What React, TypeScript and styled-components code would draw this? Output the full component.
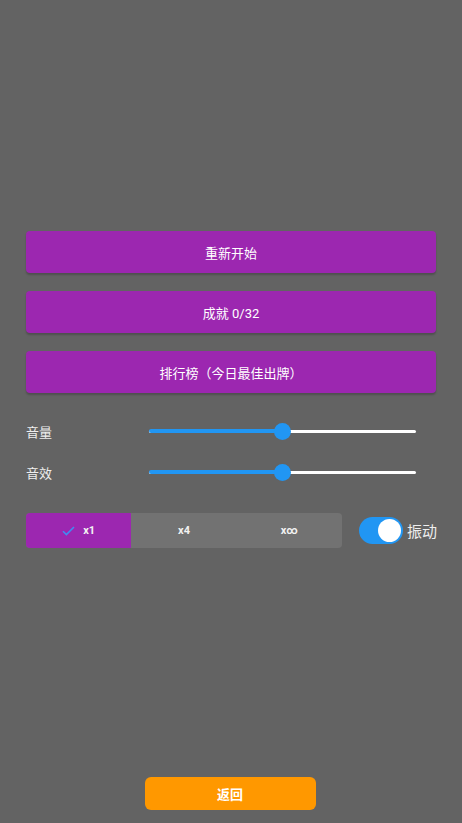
import styled, { createGlobalStyle } from "styled-components"

const GlobalStyle = createGlobalStyle`
  html, body {
    margin: 0;
    padding: 0;
    background: #636363;
  }
  * {
    box-sizing: border-box;
  }
`

const Page = styled.div`
  min-height: 100vh;
  display: flex;
  flex-direction: column;
  padding: 0 26px;
  font-family: Roboto, "Noto Sans CJK SC", sans-serif;
  color: #fff;
`

const Menu = styled.div`
  margin-top: 231px;
  display: flex;
  flex-direction: column;
  gap: 18px;
`

const MenuButton = styled.button`
  height: 42px;
  width: 100%;
  border: none;
  border-radius: 4px;
  background: #9c27b0;
  color: #fff;
  font-family: inherit;
  font-size: 13px;
  font-weight: 400;
  box-shadow: 0 2px 2px rgba(0, 0, 0, 0.2);
`

const Sliders = styled.div`
  margin-top: 23px;
  display: flex;
  flex-direction: column;
  gap: 11px;
`

const SliderRow = styled.div`
  height: 30px;
  display: flex;
  align-items: center;
  padding-right: 20px;
`

const SliderLabel = styled.div`
  width: 123px;
  font-size: 13px;
  color: #eee;
`

const Track = styled.div`
  position: relative;
  flex: 1;
  height: 3px;
  border-radius: 2px;
  background: #fff;
`

const ActiveTrack = styled.div<{ $value: number }>`
  position: absolute;
  left: 0;
  top: -0.5px;
  height: 4px;
  width: ${(p) => p.$value}%;
  border-radius: 2px;
  background: #2196f3;
`

const Thumb = styled.div<{ $value: number }>`
  position: absolute;
  left: ${(p) => p.$value}%;
  top: 50%;
  width: 17px;
  height: 17px;
  margin: -8.5px 0 0 -8.5px;
  border-radius: 50%;
  background: #2196f3;
`

const Options = styled.div`
  margin-top: 26px;
  display: flex;
  align-items: center;
`

const Segments = styled.div`
  flex: 0 0 316px;
  height: 35px;
  display: flex;
  border-radius: 4px;
  overflow: hidden;
  background: #727272;
`

const Segment = styled.div<{ $active?: boolean }>`
  flex: 1;
  display: flex;
  align-items: center;
  justify-content: center;
  gap: 8px;
  font-size: 11px;
  font-weight: 700;
  color: #f2f2f2;
  background: ${(p) => (p.$active ? "#9c27b0" : "transparent")};
`

const Toggle = styled.div`
  flex: 0 0 44px;
  margin-left: 17px;
  height: 27px;
  border-radius: 14px;
  background: #2196f3;
  display: flex;
  align-items: center;
  justify-content: flex-end;
  padding-right: 2px;
`

const ToggleKnob = styled.div`
  width: 23px;
  height: 23px;
  border-radius: 50%;
  background: #fff;
`

const ToggleLabel = styled.span`
  margin-left: 4px;
  font-size: 15px;
  color: #eee;
  white-space: nowrap;
`

const Spacer = styled.div`
  flex: 1;
`

const BackButton = styled.button`
  align-self: center;
  margin: 0 0 13px -2px;
  width: 171px;
  height: 33px;
  border: none;
  border-radius: 6px;
  background: #ff9800;
  color: #fff;
  font-family: inherit;
  font-size: 13px;
  font-weight: 700;
`

const Check = () => (
  <svg width="13" height="10" viewBox="0 0 13 10">
    <path d="M1 5.2 L4.4 8.6 L12 1" fill="none" stroke="#3f8cf2" strokeWidth="1.6" />
  </svg>
)

const Slider = ({ label, value }: { label: string; value: number }) => (
  <SliderRow>
    <SliderLabel>{label}</SliderLabel>
    <Track>
      <ActiveTrack $value={value} />
      <Thumb $value={value} />
    </Track>
  </SliderRow>
)

export default function App() {
  return (
    <>
      <GlobalStyle />
      <Page>
        <Menu>
          <MenuButton>重新开始</MenuButton>
          <MenuButton>成就 0/32</MenuButton>
          <MenuButton>排行榜（今日最佳出牌）</MenuButton>
        </Menu>
        <Sliders>
          <Slider label="音量" value={50} />
          <Slider label="音效" value={50} />
        </Sliders>
        <Options>
          <Segments>
            <Segment $active>
              <Check />
              x1
            </Segment>
            <Segment>x4</Segment>
            <Segment>x∞</Segment>
          </Segments>
          <Toggle>
            <ToggleKnob />
          </Toggle>
          <ToggleLabel>振动</ToggleLabel>
        </Options>
        <Spacer />
        <BackButton>返回</BackButton>
      </Page>
    </>
  )
}
